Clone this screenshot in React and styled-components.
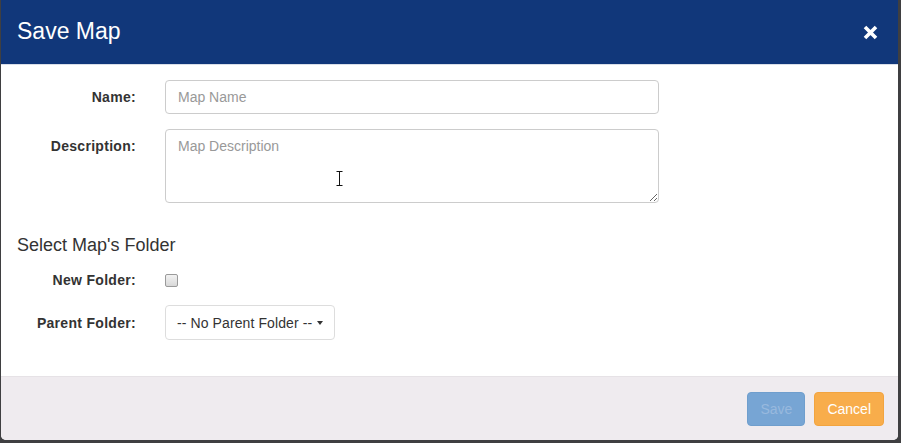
import React from 'react';
import styled, { createGlobalStyle } from 'styled-components';

const GlobalStyle = createGlobalStyle`
  html, body {
    margin: 0;
    padding: 0;
    background: #3f3f41;
    font-family: "Liberation Sans", Arial, sans-serif;
  }
`;

const Modal = styled.div`
  width: 897px;
  height: 440px;
  margin-left: 1px;
  background: #ffffff;
  border-radius: 0 0 5px 5px;
  overflow: hidden;
  display: flex;
  flex-direction: column;
`;

const Header = styled.div`
  height: 65px;
  flex: none;
  background: #11377a;
  border-bottom: 1px solid #d9dee8;
  display: flex;
  align-items: center;
  justify-content: space-between;
  padding: 0 20px 2px 16px;
  box-sizing: border-box;
`;

const Title = styled.h4`
  margin: 0;
  font-size: 23px;
  font-weight: normal;
  color: #ffffff;
`;

const CloseButton = styled.button`
  border: none;
  background: none;
  padding: 0;
  display: flex;
  cursor: pointer;
  margin-top: 3px;
`;

const Body = styled.div`
  flex: 1;
  padding-top: 15px;
  position: relative;
`;

const Row = styled.div`
  display: grid;
  grid-template-columns: 135px 494px;
  column-gap: 29px;
  align-items: ${(p) => (p.$top ? 'start' : 'center')};
  height: ${(p) => p.$height}px;
  margin-bottom: ${(p) => p.$gap || 0}px;
`;

const Label = styled.label`
  text-align: right;
  font-size: 14px;
  font-weight: bold;
  letter-spacing: 0.3px;
  color: #333333;
  padding-top: ${(p) => (p.$top ? '9px' : '0')};
`;

const fieldBase = `
  box-sizing: border-box;
  width: 494px;
  border: 1px solid #cccccc;
  border-radius: 4px;
  padding: 6px 12px;
  font-family: "Liberation Sans", Arial, sans-serif;
  font-size: 14px;
  color: #555555;
  background: #ffffff;
  outline: none;
  &::placeholder { color: #999999; }
`;

const TextInput = styled.input`
  ${fieldBase}
  height: 34px;
`;

const TextArea = styled.textarea`
  ${fieldBase}
  height: 74px;
  padding-top: 8px;
  resize: vertical;
  display: block;
`;

const SectionTitle = styled.h3`
  margin: 32px 0 15px 16px;
  font-size: 18px;
  line-height: 20px;
  font-weight: normal;
  color: #333333;
`;

const Checkbox = styled.input`
  appearance: none;
  margin: 0;
  width: 13px;
  height: 13px;
  border: 1px solid #9a9a9a;
  border-radius: 2px;
  background: linear-gradient(#f2f2f2, #d8d8d8);
  box-sizing: border-box;
  margin-top: 1px;
`;

const DropdownButton = styled.button`
  justify-self: start;
  height: 35px;
  width: 170px;
  box-sizing: border-box;
  border: 1px solid #dddddd;
  border-radius: 4px;
  background: #ffffff;
  padding: 0 11px 0 11px;
  display: flex;
  align-items: center;
  justify-content: space-between;
  font-family: "Liberation Sans", Arial, sans-serif;
  font-size: 14px;
  letter-spacing: 0.1px;
  color: #333333;
`;

const Caret = styled.span`
  width: 0;
  height: 0;
  border-left: 3px solid transparent;
  border-right: 3px solid transparent;
  border-top: 4px solid #333333;
`;

const Cursor = styled.svg`
  position: absolute;
  left: 335px;
  top: 106px;
`;

const Footer = styled.div`
  height: 64px;
  flex: none;
  box-sizing: border-box;
  background: #efebef;
  border-top: 1px solid #e6e2e6;
  display: flex;
  justify-content: flex-end;
  align-items: flex-start;
  gap: 9px;
  padding: 15px 14px 0 0;
`;

const Button = styled.button`
  height: 34px;
  box-sizing: border-box;
  padding: 0 12px;
  border-radius: 4px;
  font-family: "Liberation Sans", Arial, sans-serif;
  font-size: 14px;
  border: 1px solid ${(p) => (p.$variant === 'warning' ? '#f2a43f' : '#6f9ecd')};
  background: ${(p) => (p.$variant === 'warning' ? '#f8ad4b' : '#77a5d4')};
  color: ${(p) => (p.$variant === 'warning' ? '#ffffff' : '#98b9de')};
`;

export default function App() {
  return (
    <>
      <GlobalStyle />
      <Modal>
        <Header>
          <Title>Save Map</Title>
          <CloseButton aria-label="Close">
            <svg width="15" height="15" viewBox="0 0 15 15">
              <path d="M2 2 L13 13 M13 2 L2 13" stroke="#ffffff" strokeWidth="3.6" />
            </svg>
          </CloseButton>
        </Header>
        <Body>
          <Row $height={34} $gap={15}>
            <Label>Name:</Label>
            <TextInput placeholder="Map Name" />
          </Row>
          <Row $height={74} $top>
            <Label $top>Description:</Label>
            <TextArea placeholder="Map Description" />
          </Row>
          <SectionTitle>Select Map's Folder</SectionTitle>
          <Row $height={20} $gap={15}>
            <Label>New Folder:</Label>
            <Checkbox type="checkbox" />
          </Row>
          <Row $height={35}>
            <Label>Parent Folder:</Label>
            <DropdownButton>
              -- No Parent Folder --
              <Caret />
            </DropdownButton>
          </Row>
          <Cursor width="7" height="15" viewBox="0 0 7 15">
            <path d="M0.5 0.5 H6.5 M3.5 0.5 V14.5 M0.5 14.5 H6.5" stroke="#111" strokeWidth="1" fill="none" />
          </Cursor>
        </Body>
        <Footer>
          <Button disabled>Save</Button>
          <Button $variant="warning">Cancel</Button>
        </Footer>
      </Modal>
    </>
  );
}
